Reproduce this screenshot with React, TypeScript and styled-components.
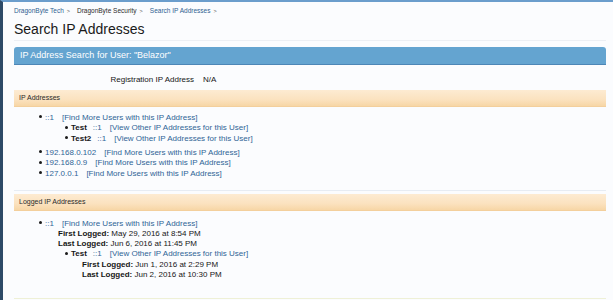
import React from "react";
import styled, { createGlobalStyle } from "styled-components";

const GlobalStyle = createGlobalStyle`
  html, body {
    margin: 0;
    padding: 0;
    background: #fbfcfe;
  }
  body {
    font-family: "Liberation Sans", Arial, sans-serif;
    color: #161616;
  }
`;

const Page = styled.div`
  min-height: 300px;
  box-sizing: border-box;
  background: #fbfcfe;
  border-top: 2px solid #6b9dcc;
  border-left: 3px solid #2d4a67;
  padding: 0 7px 0 11px;
  overflow: hidden;
`;

const Breadcrumb = styled.div`
  display: flex;
  align-items: center;
  padding-top: 4px;
  height: 10px;
  line-height: 10px;
  font-size: 6.5px;
`;

const Crumb = styled.span<{ $current?: boolean }>`
  color: ${(p) => (p.$current ? "#2b2b2b" : "#2f5f91")};
`;

const Arrow = styled.span`
  color: #555;
  font-size: 5.5px;
  margin: 0 7px 0 3px;
`;

const Title = styled.h1`
  margin: 4px 0 0;
  padding-bottom: 2px;
  font-size: 14px;
  line-height: 18px;
  font-weight: normal;
  color: #1a1a1a;
  border-bottom: 1px solid #eceff4;
`;

const SectionBar = styled.div`
  margin-top: 6px;
  height: 17px;
  line-height: 17px;
  padding-left: 6px;
  font-size: 9px;
  color: #fff;
  background: #64a4d0;
  border-bottom: 1px solid #4d86b6;
  border-radius: 3px 3px 0 0;
`;

const RegRow = styled.div`
  display: flex;
  padding-top: 10px;
  line-height: 10px;
  font-size: 8px;
`;

const RegLabel = styled.span`
  width: 180px;
  text-align: right;
  margin-right: 9px;
`;

const SubHeading = styled.div<{ $top: number }>`
  margin-top: ${(p) => p.$top}px;
  height: 16px;
  line-height: 16px;
  padding-left: 5px;
  font-size: 7px;
  color: #2a2a2a;
  background: linear-gradient(180deg, #fdebd2 0%, #fbe2bf 60%, #f7d6a6 100%);
  border-bottom: 1px solid #f3cf9c;
`;

const List = styled.ul<{ $indent: number; $top?: number; $lh?: number }>`
  list-style: none;
  margin: ${(p) => p.$top ?? 0}px 0 0;
  padding: 0 0 0 ${(p) => p.$indent}px;
  font-size: 8px;
  line-height: ${(p) => p.$lh ?? 10.5}px;
`;

const Item = styled.li<{ $gap?: number }>`
  padding-left: 6px;
  margin-bottom: ${(p) => p.$gap ?? 0}px;
  &::before {
    content: "";
    display: inline-block;
    width: 3px;
    height: 3px;
    border-radius: 50%;
    background: #1a1a1a;
    margin-left: -6px;
    margin-right: 3px;
    vertical-align: 1.5px;
  }
`;

const Name = styled.b`
  margin-right: 6px;
`;

const Ip = styled.span`
  color: #2f6496;
  margin-right: 8px;
`;

const Link = styled.a`
  color: #2f6496;
  text-decoration: none;
`;

const Detail = styled.div<{ $indent: number }>`
  margin-left: ${(p) => p.$indent}px;
`;

const Divider = styled.div`
  margin-top: 11px;
  border-top: 1px solid #e7ecf3;
`;

const BottomLine = styled.div`
  margin-top: 17px;
  border-top: 1px solid #eef0d6;
`;

type UserRow = { name: string; ip: string; first?: string; last?: string };
type IpRow = { ip: string; users?: UserRow[]; first?: string; last?: string };

const ipAddresses: IpRow[] = [
  {
    ip: "::1",
    users: [
      { name: "Test", ip: "::1" },
      { name: "Test2", ip: "::1" },
    ],
  },
  { ip: "192.168.0.102" },
  { ip: "192.168.0.9" },
  { ip: "127.0.0.1" },
];

const loggedIps: IpRow[] = [
  {
    ip: "::1",
    first: "May 29, 2016 at 8:54 PM",
    last: "Jun 6, 2016 at 11:45 PM",
    users: [
      {
        name: "Test",
        ip: "::1",
        first: "Jun 1, 2016 at 2:29 PM",
        last: "Jun 2, 2016 at 10:30 PM",
      },
    ],
  },
];

const Dates = ({ first, last, indent }: { first?: string; last?: string; indent: number }) =>
  first ? (
    <>
      <Detail $indent={indent}>
        <b>First Logged:</b> {first}
      </Detail>
      <Detail $indent={indent}>
        <b>Last Logged:</b> {last}
      </Detail>
    </>
  ) : null;

const IpList = ({ rows, top, lh }: { rows: IpRow[]; top: number; lh: number }) => (
  <List $indent={25} $top={top} $lh={lh}>
    {rows.map((row, i) => (
      <Item key={row.ip + i} $gap={row.users && i < rows.length - 1 ? 3.5 : 0}>
        <Ip>{row.ip}</Ip>
        <Link href="#">[Find More Users with this IP Address]</Link>
        <Dates first={row.first} last={row.last} indent={13} />
        {row.users && (
          <List $indent={20}>
            {row.users.map((u) => (
              <Item key={u.name}>
                <Name>{u.name}</Name>
                <Ip>{u.ip}</Ip>
                <Link href="#">[View Other IP Addresses for this User]</Link>
                <Dates first={u.first} last={u.last} indent={11} />
              </Item>
            ))}
          </List>
        )}
      </Item>
    ))}
  </List>
);

const App = () => (
  <>
    <GlobalStyle />
    <Page>
      <Breadcrumb>
        <Crumb>DragonByte Tech</Crumb>
        <Arrow>&gt;</Arrow>
        <Crumb $current>DragonByte Security</Crumb>
        <Arrow>&gt;</Arrow>
        <Crumb>Search IP Addresses</Crumb>
        <Arrow>&gt;</Arrow>
      </Breadcrumb>
      <Title>Search IP Addresses</Title>
      <SectionBar>IP Address Search for User: "Belazor"</SectionBar>
      <RegRow>
        <RegLabel>Registration IP Address</RegLabel>
        <span>N/A</span>
      </RegRow>
      <SubHeading $top={5}>IP Addresses</SubHeading>
      <IpList rows={ipAddresses} top={5.5} lh={10.6} />
      <Divider />
      <SubHeading $top={3}>Logged IP Addresses</SubHeading>
      <IpList rows={loggedIps} top={7.5} lh={10.2} />
      <BottomLine />
    </Page>
  </>
);

export default App;
